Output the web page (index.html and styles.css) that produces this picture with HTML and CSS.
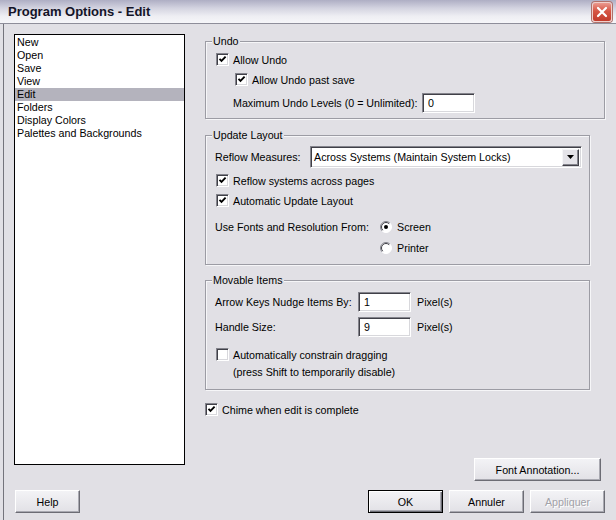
FILE: index.html
```html
<!DOCTYPE html>
<html>
<head>
<meta charset="utf-8">
<title>Program Options - Edit</title>
<link rel="stylesheet" href="styles.css">
</head>
<body>
<div class="window">
  <div class="titlebar">
    <span class="title">Program Options - Edit</span>
    <span class="close"><svg width="12" height="12" viewBox="0 0 12 12"><path d="M2 2 L10 10 M10 2 L2 10" stroke="#fff" stroke-width="2.2" stroke-linecap="round"/></svg></span>
  </div>
  <div class="body">
    <div class="main">
      <ul class="list">
        <li>New</li>
        <li>Open</li>
        <li>Save</li>
        <li>View</li>
        <li class="selected">Edit</li>
        <li>Folders</li>
        <li>Display Colors</li>
        <li>Palettes and Backgrounds</li>
      </ul>
      <div class="panel">
        <div class="group group-undo">
          <span class="group-title">Undo</span>
          <label class="chk"><span class="box"><svg width="9" height="9" viewBox="0 0 9 9"><path d="M1.5 3.8 L3.5 5.8 L7.6 1.7" fill="none" stroke="#000" stroke-width="1.9"/></svg></span><span class="text">Allow Undo</span></label>
          <label class="chk indent"><span class="box"><svg width="9" height="9" viewBox="0 0 9 9"><path d="M1.5 3.8 L3.5 5.8 L7.6 1.7" fill="none" stroke="#000" stroke-width="1.9"/></svg></span><span class="text">Allow Undo past save</span></label>
          <div class="field field-undo"><span class="lbl lbl-undo">Maximum Undo Levels (0 = Unlimited):</span><span class="input">0</span></div>
        </div>

        <div class="group group-layout">
          <span class="group-title">Update Layout</span>
          <div class="field"><span class="lbl lbl-reflow">Reflow Measures:</span><div class="select"><span>Across Systems (Maintain System Locks)</span><span class="drop"><svg width="7" height="4" viewBox="0 0 7 4"><path d="M0 0 H7 L3.5 4 Z" fill="#000"/></svg></span></div></div>
          <label class="chk chk-a"><span class="box"><svg width="9" height="9" viewBox="0 0 9 9"><path d="M1.5 3.8 L3.5 5.8 L7.6 1.7" fill="none" stroke="#000" stroke-width="1.9"/></svg></span><span class="text">Reflow systems across pages</span></label>
          <label class="chk chk-b"><span class="box"><svg width="9" height="9" viewBox="0 0 9 9"><path d="M1.5 3.8 L3.5 5.8 L7.6 1.7" fill="none" stroke="#000" stroke-width="1.9"/></svg></span><span class="text">Automatic Update Layout</span></label>
          <div class="radio-row radio-first"><span class="lbl lbl-fonts">Use Fonts and Resolution From:</span><svg class="radio" width="12" height="12" viewBox="0 0 12 12"><circle cx="6" cy="6" r="5.5" fill="#fff"/><path d="M2.1 9.9 A5.5 5.5 0 0 1 9.9 2.1" fill="none" stroke="#84848c"/><path d="M2.8 9.2 A4.5 4.5 0 0 1 9.2 2.8" fill="none" stroke="#404048"/><path d="M9.9 2.1 A5.5 5.5 0 0 1 2.1 9.9" fill="none" stroke="#ffffff"/><circle cx="6" cy="6" r="2" fill="#000"/></svg><span class="text">Screen</span></div>
          <div class="radio-row radio-second"><svg class="radio" width="12" height="12" viewBox="0 0 12 12"><circle cx="6" cy="6" r="5.5" fill="#fff"/><path d="M2.1 9.9 A5.5 5.5 0 0 1 9.9 2.1" fill="none" stroke="#84848c"/><path d="M2.8 9.2 A4.5 4.5 0 0 1 9.2 2.8" fill="none" stroke="#404048"/><path d="M9.9 2.1 A5.5 5.5 0 0 1 2.1 9.9" fill="none" stroke="#ffffff"/></svg><span class="text">Printer</span></div>
        </div>

        <div class="group group-move">
          <span class="group-title">Movable Items</span>
          <div class="field"><span class="lbl lbl-move">Arrow Keys Nudge Items By:</span><span class="input">1</span><span class="unit">Pixel(s)</span></div>
          <div class="field field-second"><span class="lbl lbl-move">Handle Size:</span><span class="input">9</span><span class="unit">Pixel(s)</span></div>
          <label class="chk chk-multi"><span class="box"></span><span class="text">Automatically constrain dragging<br>(press Shift to temporarily disable)</span></label>
        </div>

        <label class="chk chime"><span class="box"><svg width="9" height="9" viewBox="0 0 9 9"><path d="M1.5 3.8 L3.5 5.8 L7.6 1.7" fill="none" stroke="#000" stroke-width="1.9"/></svg></span><span class="text">Chime when edit is complete</span></label>

        <button class="btn btn-annot">Font Annotation...</button>
      </div>
    </div>
    <div class="footer">
      <button class="btn btn-help">Help</button>
      <div class="actions">
        <button class="btn btn-default">OK</button>
        <button class="btn">Annuler</button>
        <button class="btn" disabled>Appliquer</button>
      </div>
    </div>
  </div>
</div>
</body>
</html>
```

FILE: styles.css
```css
* { box-sizing: border-box; }
html, body { margin: 0; padding: 0; }
body {
  font-family: "Liberation Sans", Arial, sans-serif;
  font-size: 10.7px;
  color: #000;
  background: #e1e0e5;
}
.window {
  width: 616px;
  height: 520px;
  display: flex;
  flex-direction: column;
  background: #e1e0e5;
  overflow: hidden;
}
.titlebar {
  flex: none;
  height: 24px;
  display: flex;
  align-items: center;
  justify-content: space-between;
  padding: 0 4px 0 8px;
  background: linear-gradient(#aeaec4, #d3d3e0 35%, #eeeef3 70%, #f6f6f9);
  border-bottom: 1px solid #8e8e9a;
}
.title {
  font-weight: bold;
  font-size: 13px;
  color: #141428;
}
.close {
  width: 20px;
  height: 20px;
  border-radius: 3px;
  border: 1px solid #f0cfca;
  box-shadow: 0 0 0 1px #b0706a;
  background: linear-gradient(#ea998e, #d65544 45%, #c23b2c);
  display: flex;
  align-items: center;
  justify-content: center;
}
.body {
  flex: 1;
  margin-left: 3px;
  border-left: 1px solid #74747c;
  display: flex;
  flex-direction: column;
}
.main {
  display: flex;
  align-items: flex-start;
  gap: 20px;
  padding: 10px 0 0 10px;
}
.list {
  list-style: none;
  margin: 0;
  padding: 1px 0 0;
  width: 171px;
  height: 431px;
  background: #fff;
  border: 1px solid #000;
}
.list li {
  height: 13px;
  line-height: 13px;
  padding-left: 2px;
  white-space: nowrap;
}
.list li.selected { background: #b4b3bd; }

.panel {
  width: 400px;
  display: flex;
  flex-direction: column;
  align-items: flex-start;
}
.group {
  position: relative;
  border: 1px solid #9c9ca4;
  box-shadow: inset 1px 1px 0 #f6f6f8, 1px 1px 0 #f6f6f8;
  display: flex;
  flex-direction: column;
  align-items: flex-start;
}
.group-title {
  position: absolute;
  top: -7px;
  left: 6px;
  padding: 0 1px;
  line-height: 13px;
  background: #e1e0e5;
  white-space: nowrap;
}
.group-undo { width: 400px; height: 78px; margin-top: 7px; padding: 11px 0 0 10px; }
.group-layout { width: 385px; height: 130px; margin-top: 16px; padding: 10px 0 0 9px; }
.group-move { width: 385px; height: 110px; margin-top: 15px; padding: 11px 0 0 9px; }

.chk {
  display: flex;
  align-items: center;
  height: 13px;
  white-space: nowrap;
}
.chk .text { margin-left: 4px; line-height: 13px; margin-top: 1px; }
.box {
  width: 13px;
  height: 13px;
  flex: none;
  background: #fff;
  border: 1px solid;
  border-color: #84848c #fff #fff #84848c;
  box-shadow: inset 1px 1px 0 #404048, inset -1px -1px 0 #d8d8dc;
  display: flex;
  align-items: center;
  justify-content: center;
}
.indent { margin-top: 7px; margin-left: 19px; }
.field { display: flex; align-items: center; white-space: nowrap; }
.field-undo { margin-top: 7px; margin-left: 17px; }
.lbl { flex: none; }
.lbl-undo { width: 189px; }
.lbl-reflow { width: 95px; }
.lbl-fonts { width: 165px; }
.lbl-move { width: 143px; }
.input {
  width: 53px;
  height: 20px;
  background: #fff;
  border: 1px solid;
  border-color: #84848c #fff #fff #84848c;
  box-shadow: inset 1px 1px 0 #404048, inset -1px -1px 0 #d8d8dc;
  padding-left: 5px;
  line-height: 19px;
}
.unit { margin-left: 6px; }
.field-second { margin-top: 5px; }
.select {
  width: 272px;
  height: 22px;
  display: flex;
  align-items: center;
  justify-content: space-between;
  background: #fff;
  border: 1px solid;
  border-color: #84848c #fff #fff #84848c;
  box-shadow: inset 1px 1px 0 #404048, inset -1px -1px 0 #d8d8dc;
  padding: 0 2px 0 3px;
}
.drop {
  width: 17px;
  height: 17px;
  background: #e4e3e8;
  border: 1px solid;
  border-color: #f6f6f8 #404048 #404048 #f6f6f8;
  box-shadow: inset -1px -1px 0 #84848c;
  display: flex;
  align-items: center;
  justify-content: center;
}
.chk-a { margin-top: 6px; margin-left: 1px; }
.chk-b { margin-top: 7px; margin-left: 1px; }
.radio-row { display: flex; align-items: center; height: 12px; white-space: nowrap; }
.radio { flex: none; display: block; }
.radio-row .text { margin-left: 5px; }
.radio-first { margin-top: 14px; }
.radio-second { margin-top: 9px; margin-left: 165px; }
.chk-multi { margin-top: 11px; margin-left: 1px; align-items: flex-start; height: auto; }
.chk-multi .text { line-height: 17px; margin-top: -1px; }
.chime { margin-top: 13px; }

.btn {
  font: inherit;
  color: #000;
  height: 23px;
  padding: 0;
  background: linear-gradient(#f3f3f6, #e2e1e6);
  border: 1px solid;
  border-color: #fff #6c6c74 #6c6c74 #fff;
  box-shadow: inset -1px -1px 0 #a9a9b1;
}
.btn-default {
  border-color: #000;
  box-shadow: inset 1px 1px 0 #fff, inset -1px -1px 0 #6c6c74, inset -2px -2px 0 #a9a9b1;
}
.btn:disabled { color: #a2a2a8; text-shadow: 1px 1px 0 #fff; }
.btn-annot { width: 127px; margin-top: 42px; margin-right: 4px; align-self: flex-end; }
.footer {
  display: flex;
  justify-content: space-between;
  padding: 0 11px;
  margin-top: 9px;
}
.btn-help { width: 65px; }
.actions { display: flex; gap: 6px; }
.actions .btn { width: 75px; }
```
